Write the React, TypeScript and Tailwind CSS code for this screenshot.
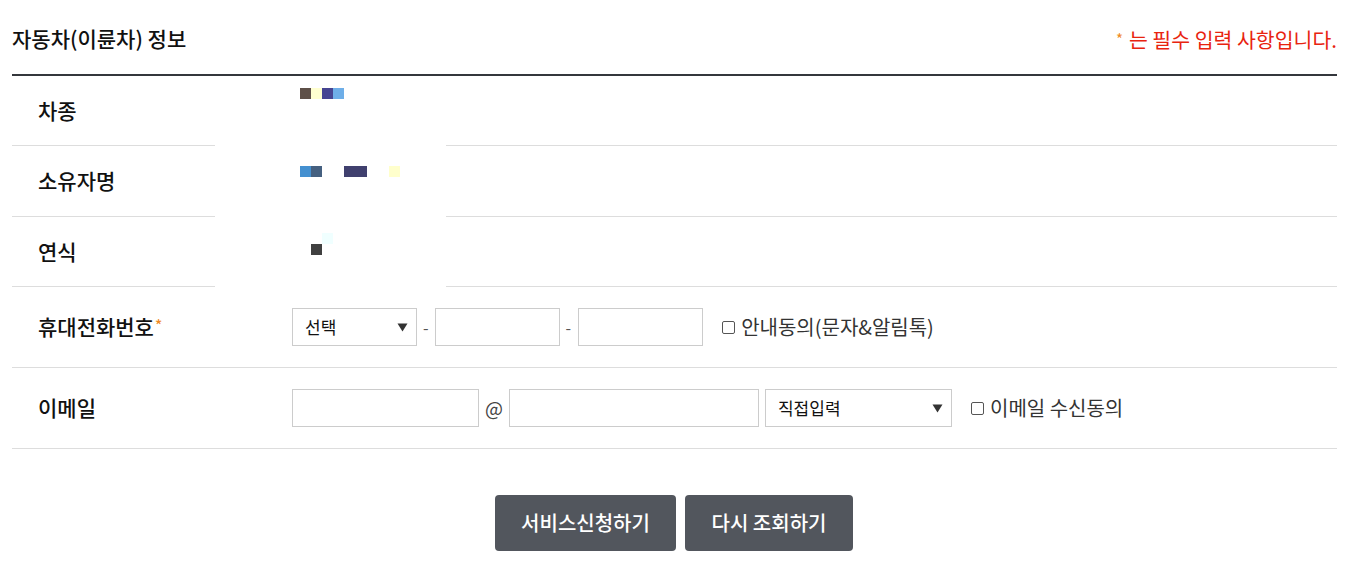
import React from "react";

const font = { fontFamily: '"Noto Sans CJK KR", "Noto Sans", sans-serif' };

function Caret() {
  return (
    <svg width="11" height="9" viewBox="0 0 11 9" className="shrink-0">
      <path d="M0.5 0.5 L10.5 0.5 L5.5 8.5 Z" fill="#333" />
    </svg>
  );
}

function Select({ label, w }: { label: string; w: string }) {
  return (
    <div className={`${w} h-[38px] border border-[#cccccc] bg-white flex items-center justify-between pl-[12px] pr-[8px] text-[17px] text-[#111]`}>
      <span>{label}</span>
      <Caret />
    </div>
  );
}

function Input({ w }: { w: string }) {
  return <div className={`${w} h-[38px] border border-[#cccccc] bg-white`} />;
}

function Check({ label }: { label: string }) {
  return (
    <div className="flex items-center text-[20px] text-[#333]">
      <span className="w-[13px] h-[13px] border border-[#555] rounded-[2px] mr-[6px] bg-white" />
      <span>{label}</span>
    </div>
  );
}

function Row({ label, h, children, star }: { label: string; h: string; children?: React.ReactNode; star?: boolean }) {
  return (
    <div className={`flex items-center ${h} border-b border-[#dddddd]`}>
      <div className="w-[280px] pl-[26px] text-[21px] font-medium text-[#111] flex items-center">
        {label}
        {star && <span className="text-[#f08a24] text-[15px] ml-[1px] -mt-[4px]">*</span>}
      </div>
      <div className="flex items-center">{children}</div>
    </div>
  );
}

export default function App() {
  return (
    <div className="bg-white w-[1361px] h-[577px] pl-[12px] pr-[24px]" style={font}>
      <div className="relative">
        <div className="h-[74px] flex items-center justify-between pt-[4px]">
          <div className="text-[21px] font-medium text-[#111]">자동차(이륜차) 정보</div>
          <div className="text-[20.5px] text-[#e8240f] flex items-center">
            <span className="text-[#f08a24] text-[15px] mr-[6px]">*</span>는 필수 입력 사항입니다.
          </div>
        </div>
        <div className="h-[2px] bg-[#34373c]" />
        <Row label="차종" h="h-[70px]" />
        <Row label="소유자명" h="h-[71px]" />
        <Row label="연식" h="h-[70px]" />
        <Row label="휴대전화번호" h="h-[81px]" star>
          <Select label="선택" w="w-[125px]" />
          <span className="ml-[6px] mr-[6px] text-[#555] text-[16px]">-</span>
          <Input w="w-[125px]" />
          <span className="ml-[6px] mr-[7px] text-[#555] text-[16px]">-</span>
          <Input w="w-[125px]" />
          <div className="ml-[19px]">
            <Check label="안내동의(문자&알림톡)" />
          </div>
        </Row>
        <Row label="이메일" h="h-[81px]">
          <Input w="w-[187px]" />
          <span className="ml-[6px] mr-[6px] text-[#444] text-[19px]">@</span>
          <Input w="w-[250px]" />
          <div className="ml-[6px]">
            <Select label="직접입력" w="w-[187px]" />
          </div>
          <div className="ml-[19px]">
            <Check label="이메일 수신동의" />
          </div>
        </Row>
        <div className="flex justify-center gap-[9px] mt-[46px] pr-[1px]">
          <button className="w-[181px] h-[56px] bg-[#52565d] rounded-[4px] text-white text-[20px] font-medium">서비스신청하기</button>
          <button className="w-[168px] h-[56px] bg-[#52565d] rounded-[4px] text-white text-[20px] font-medium">다시 조회하기</button>
        </div>

        {/* redaction overlay */}
        <div className="absolute left-[203px] top-[76px] w-[231px] h-[211px] bg-white">
          <div className="absolute left-[85px] top-[12px] flex">
            <span className="w-[11px] h-[11px] bg-[#5e5048]" />
            <span className="w-[11px] h-[11px] bg-[#ffffd0]" />
            <span className="w-[11px] h-[11px] bg-[#464592]" />
            <span className="w-[11px] h-[11px] bg-[#6eaee8]" />
          </div>
          <div className="absolute left-[85px] top-[90px] flex">
            <span className="w-[11px] h-[11px] bg-[#4490d0]" />
            <span className="w-[11px] h-[11px] bg-[#456080]" />
            <span className="w-[22px] h-[11px]" />
            <span className="w-[23px] h-[11px] bg-[#40406e]" />
            <span className="w-[22px] h-[11px]" />
            <span className="w-[11px] h-[11px] bg-[#ffffcc]" />
          </div>
          <span className="absolute left-[107px] top-[157px] w-[11px] h-[11px] bg-[#f0ffff]" />
          <span className="absolute left-[96px] top-[168px] w-[11px] h-[11px] bg-[#404040]" />
        </div>
      </div>
    </div>
  );
}
